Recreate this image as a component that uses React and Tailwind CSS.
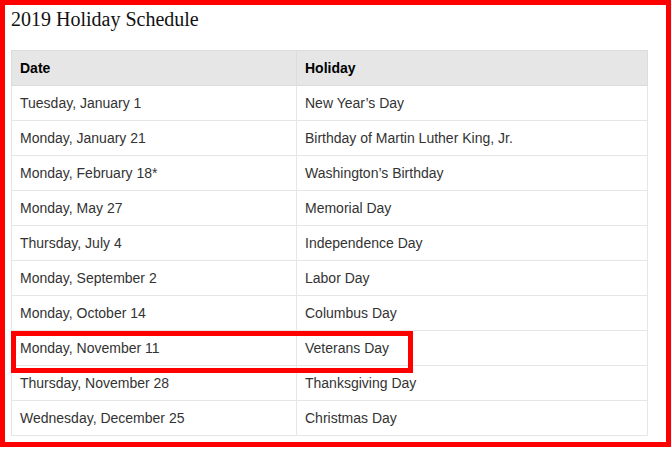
import React from "react";

const rows = [
  ["Tuesday, January 1", "New Year\u2019s Day"],
  ["Monday, January 21", "Birthday of Martin Luther King, Jr."],
  ["Monday, February 18*", "Washington\u2019s Birthday"],
  ["Monday, May 27", "Memorial Day"],
  ["Thursday, July 4", "Independence Day"],
  ["Monday, September 2", "Labor Day"],
  ["Monday, October 14", "Columbus Day"],
  ["Monday, November 11", "Veterans Day"],
  ["Thursday, November 28", "Thanksgiving Day"],
  ["Wednesday, December 25", "Christmas Day"],
];

export default function App() {
  return (
    <div className="w-[672px] h-[450px] bg-white">
      <div className="relative w-[671px] h-[447px] border-[5px] border-[#ff0000] pl-[6px] pr-[17px]">
        <h2 className="pt-[2px] h-[45px] text-[20px] leading-[24px] text-[#111] font-['Liberation_Serif',serif]">
          2019 Holiday Schedule
        </h2>
        <table className="w-[637px] border-collapse font-['Liberation_Sans',Arial,sans-serif] text-[14px] text-[#333]">
          <thead>
            <tr className="bg-[#e6e6e6] h-[35px]">
              <th className="w-[285px] border border-[#dcdcdc] px-[8px] text-left font-bold text-black">Date</th>
              <th className="border border-[#dcdcdc] px-[8px] text-left font-bold text-black">Holiday</th>
            </tr>
          </thead>
          <tbody>
            {rows.map(([d, h]) => (
              <tr key={d} className="h-[35px]">
                <td className="border border-[#e6e6e6] px-[8px]">{d}</td>
                <td className="border border-[#e6e6e6] px-[8px]">{h}</td>
              </tr>
            ))}
          </tbody>
        </table>
        {/* highlight box over Veterans Day row */}
        <div className="absolute left-[6px] top-[326px] w-[402px] h-[42px] border-[5px] border-[#ff0000]" />
      </div>
    </div>
  );
}
